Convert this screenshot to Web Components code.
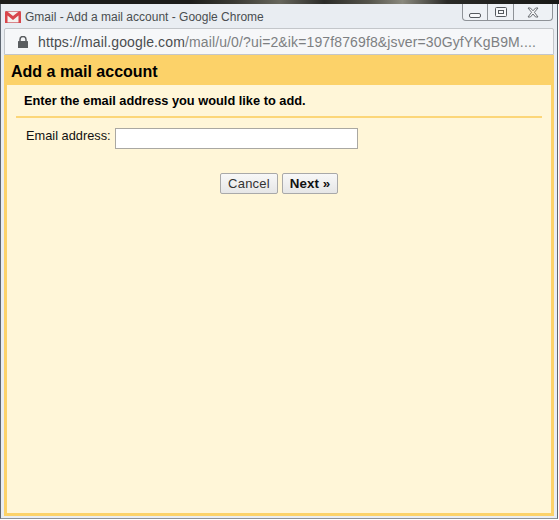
<!DOCTYPE html>
<html lang="en">
<head>
<meta charset="utf-8">
<title>Add a mail account</title>
<style>
  html,body{margin:0;height:520px;overflow:hidden;background:#fff}
  body{font-family:"Liberation Sans",Arial,sans-serif}
</style>
</head>
<body>
<chrome-popup>
  <add-account-dialog></add-account-dialog>
</chrome-popup>
<script>
(() => {
  "use strict";

  class WindowControls extends HTMLElement {
    connectedCallback() {
      if (this.shadowRoot) return;
      const shadow = this.attachShadow({ mode: "open" });
      shadow.innerHTML = `
        <style>
          :host{display:flex;width:91px;height:17px;box-sizing:border-box;border:1px solid #8e9297;border-top:0;border-radius:0 0 4px 4px;background:#eef1f5}
          span{display:flex;align-items:center;justify-content:center;height:100%}
          span+span{border-left:1px solid #8e9297}
          .min{width:24px;padding-top:4px}.max{width:25px}.close{flex:1}
          svg{display:block}
        </style>
        <span class="min"><svg width="12" height="6" viewBox="0 0 12 6"><rect x=".5" y=".5" width="11" height="4" rx="1.5" fill="#f7f8fa" stroke="#55595e"/></svg></span>
        <span class="max"><svg width="12" height="11" viewBox="0 0 12 11"><rect x=".5" y=".5" width="11" height="9" rx="1" fill="#f7f8fa" stroke="#55595e"/><rect x="3.5" y="3.5" width="5" height="3" fill="none" stroke="#55595e"/></svg></span>
        <span class="close"><svg width="12" height="11" viewBox="0 0 12 11"><path d="M1 1h2.4L6 3.8 8.6 1H11L7.4 5.3 11 10H8.6L6 7 3.4 10H1l3.6-4.7z" fill="#f7f8fa" stroke="#6a6e73" stroke-width="1"/></svg></span>`;
    }
  }

  class ChromePopup extends HTMLElement {
    connectedCallback() {
      if (this.shadowRoot) return;
      const shadow = this.attachShadow({ mode: "open" });
      shadow.innerHTML = `
        <style>
          *{box-sizing:border-box}
          :host{display:block;height:520px;font-family:"Liberation Sans",Arial,sans-serif}
          .wall{height:4px;background:linear-gradient(90deg,#1c1c1a 0 34%,#3a3a34 42%,#67665c 50%,#2b2b28 58%,#55544b 66%,#8a897e 72%,#2a2a27 80%,#181816 100%)}
          .frame{height:515px;margin-right:1px;padding:0 3px 2px 3px;background:#e9edf2;border-left:1px solid #5e6670;border-right:1px solid #5e6670;border-bottom:1px solid #8d939a;display:flex;flex-direction:column}
          .title{height:24px;flex:none;display:flex;justify-content:space-between;align-items:flex-start;padding:0 1px 0 1px}
          .name{display:flex;align-items:center;gap:4px;height:24px;padding-top:1px;font-size:12px;color:#4a4d50;white-space:nowrap}
          .url{height:27px;flex:none;display:flex;align-items:center;gap:10px;padding:0 0 0 13px;background:#f6f7f9;border:1px solid #c3c6ca;border-radius:2px 2px 0 0;font-size:14px;letter-spacing:.13px;color:#7d7f82;white-space:nowrap;overflow:hidden}
          .url b{font-weight:400;color:#4a4d50}
          .body{flex:1;min-height:0;display:flex}
          ::slotted(*){flex:1}
        </style>
        <div class="wall"></div>
        <div class="frame">
          <div class="title">
            <div class="name">
              <svg width="16" height="12" viewBox="0 0 16 12"><rect x=".5" y=".5" width="15" height="11" fill="#f4f1ee" stroke="#d8858a"/><path d="M0 1.5V12h2.5V4.6L8 9l5.5-4.4V12H16V1.5L14.4 0 8 5 1.6 0z" fill="#d8454b"/></svg>
              <span>Gmail - Add a mail account - Google Chrome</span>
            </div>
            <window-controls></window-controls>
          </div>
          <div class="url">
            <svg width="10" height="12" viewBox="0 0 10 12"><path d="M2 5V3.5a3 3 0 0 1 6 0V5" fill="none" stroke="#5a5d60" stroke-width="1.5"/><rect y="5" width="10" height="7" rx=".5" fill="#5a5d60"/></svg>
            <span><b>https://mail.google.com</b>/mail/u/0/?ui=2&amp;ik=197f8769f8&amp;jsver=30GyfYKgB9M....</span>
          </div>
          <div class="body"><slot></slot></div>
        </div>`;
    }
  }

  class MailButton extends HTMLElement {
    connectedCallback() {
      if (this.shadowRoot) return;
      const shadow = this.attachShadow({ mode: "open" });
      shadow.innerHTML = `
        <style>
          :host{display:inline-block}
          button{display:block;box-sizing:border-box;height:21px;width:100%;padding:0;margin:0;border:1px solid #a9a9a9;border-radius:2px;background:linear-gradient(#f8f8f8,#e6e6e6);color:#333;font:13px "Liberation Sans",Arial,sans-serif;letter-spacing:.25px}
          :host([primary]) button{font-size:13.33px;font-weight:700;color:#111;letter-spacing:.1px}
        </style>
        <button type="button"><slot></slot></button>`;
    }
  }

  class AddAccountDialog extends HTMLElement {
    connectedCallback() {
      if (this.shadowRoot) return;
      const shadow = this.attachShadow({ mode: "open" });
      shadow.innerHTML = `
        <style>
          *{box-sizing:border-box}
          :host{display:flex;flex-direction:column;background:#fcd269;padding:0 3px 3px;font-family:"Liberation Sans",Arial,sans-serif;color:#000}
          h1{margin:0;height:30px;flex:none;padding:3px 0 0 4px;display:flex;align-items:center;font-size:16px;font-weight:700}
          .content{flex:1;background:#fff6d8;padding:0 9px}
          h2{margin:0;height:33px;padding:0 0 1px 8px;display:flex;align-items:center;font-size:12.8px;font-weight:700;border-bottom:2px solid #fcd678}
          .row{display:flex;align-items:flex-start;gap:4px;padding:10px 0 0 10px}
          label{font-size:12.8px;line-height:15px;padding-top:0;color:#111}
          input{display:block;width:243px;height:21px;margin:0;padding:0;border:1px solid #aaa8a2;background:#fff;border-radius:0}
          .actions{display:flex;gap:4px;padding:24px 0 0 204px}
          .cancel{width:58px}
          .next{width:56px}
        </style>
        <h1>Add a mail account</h1>
        <div class="content">
          <h2>Enter the email address you would like to add.</h2>
          <div class="row">
            <label for="address">Email address:</label>
            <input id="address" type="text">
          </div>
          <div class="actions">
            <mail-button class="cancel">Cancel</mail-button>
            <mail-button class="next" primary>Next »</mail-button>
          </div>
        </div>`;
    }
  }

  customElements.define("window-controls", WindowControls);
  customElements.define("chrome-popup", ChromePopup);
  customElements.define("mail-button", MailButton);
  customElements.define("add-account-dialog", AddAccountDialog);
})();
</script>
</body>
</html>
